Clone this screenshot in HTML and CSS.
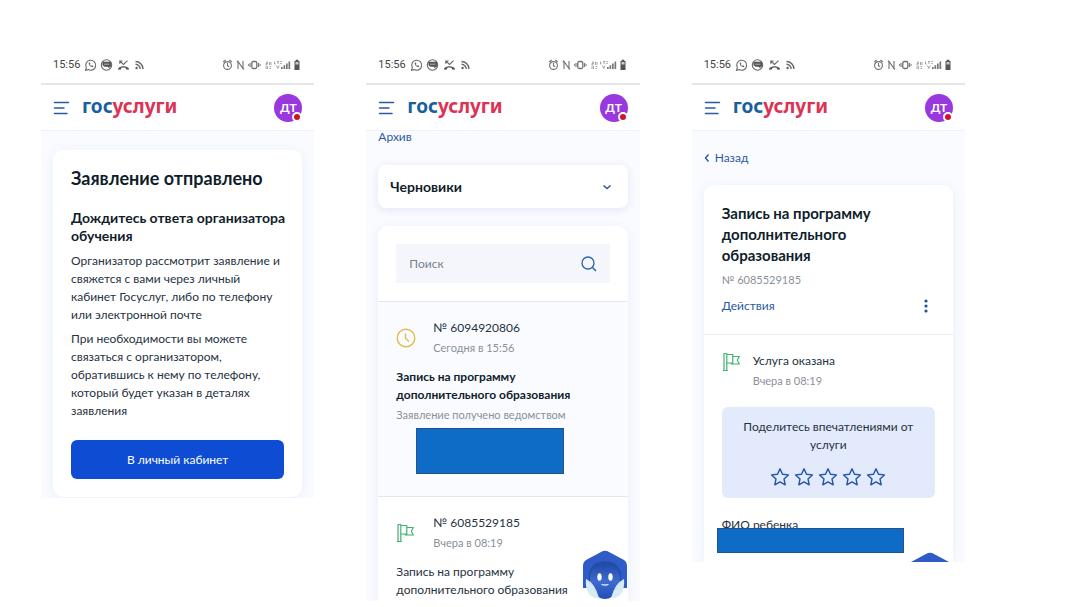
FILE: index.html
```
<!DOCTYPE html>
<html lang="ru">
<head>
    <meta charset="utf-8">
    <meta name="viewport" content="width=device-width, initial-scale=1">
    <title>Госуслуги</title>
    <link rel="stylesheet" href="styles.css">
</head>
<body>
    <!-- shared icons -->
    <svg class="sprite" aria-hidden="true">
        <symbol id="i-left" viewBox="0 0 62 14">
            <g fill="none" stroke="#666" stroke-width="1.1">
                <path d="M1.5 12.3l.8-2.7a5 5 0 1 1 2 2z"/>
                <path d="M4.6 5c.4 2.5 1.8 4 4.1 4.3l.8-1.2-1.6-.8-.7.7c-.7-.4-1-.9-1.3-1.5l.5-.7-.7-1.5z" fill="#666" stroke="none"/>
                <circle cx="22.500" cy="7" r="5.200"/>
                <path d="M18.500 3.800h8.500v5h-1.500v1.700l-2-1.700h-3l-2-1.500z" fill="#555" stroke="none"/>
                <path d="M20 6.200h5.500" stroke="#bbb" stroke-width=".9"/>
                <path d="M36 3.200l3.500 3.300 4-3.800M35.800 5.800v-2.800h2.700"/>
                <path d="M34.200 11.800v-1.600c3-2.600 7.600-2.600 10.600 0v1.600l-2.700-.4-.5-1.700q-2.100-.6-4.200 0l-.5 1.700z" fill="#555" stroke="none"/>
                <path d="M51.500 3.500a7.500 7.500 0 0 1 7.500 7.500M51.500 6.300a4.700 4.700 0 0 1 4.700 4.700" stroke-width="1.400"/>
                <circle cx="52.600" cy="10" r="1.200" fill="#666" stroke="none"/>
            </g>
        </symbol>
        <symbol id="i-right" viewBox="0 0 80 14">
            <g fill="none" stroke="#707070" stroke-width="1.100">
                <circle cx="5.500" cy="7.500" r="3.900"/>
                <path d="M5.500 5v2.700l1.700 1M1.200 4l2.400-2M9.800 4l-2.400-2"/>
                <path d="M16 11v-7.500l5 7v-7.500M14.800 3.500h1.700M20.500 10.700h1.700"/>
                <rect x="29.800" y="3.500" width="5" height="7" rx="1.500" stroke-width="1.300"/>
                <path d="M28 5v4M36.600 5v4M26.500 6.200v1.600M38.200 6.200v1.600"/>
                <path d="M44 4h1.500v1.500h-1.500v1.500h1.500M47.500 4v3M49 4v3M44 8.200v2.800M45.500 8.200v2.800M47.500 8.500h1.700M47.500 10.500h1.700" stroke="#999" stroke-width=".9"/>
                <path d="M52.500 3.500v2.500h1.200M55 3.500h2M56 3.500v2.500M58.200 3.500h1.600M58.200 5.500h1.600M54.500 7.500l1.300 3 1.300-3" stroke="#999" stroke-width=".9"/>
            </g>
            <path d="M59 11v-2h1.700v2zM61.500 11v-3.700h1.700v3.700zM64 11v-5.500h1.700v5.500zM66.500 11v-7.500h1.700v7.500z" fill="#777"/>
            <path d="M72.500 3h1.200v-1.200h2.600v1.200h1.200v9h-5z" fill="#555"/>
            <path d="M73.500 4h3v2.500h-3z" fill="#ccc"/>
        </symbol>
        <symbol id="i-menu" viewBox="0 0 16 14">
            <path d="M1 1.500h14M1 7h9.500M1 12.500h12.500" stroke="#2b5aa0" stroke-width="1.500" stroke-linecap="round"/>
        </symbol>
        <symbol id="i-flag" viewBox="0 0 20 20">
            <path d="M2 1.500h2.800v17h-2.800zM1 18.500h4.800M4.800 2.500h6v8.500h-6M10.800 4.500h6.500l-2 3.700 2 3.800h-8v-1M10.800 4.500v6.500l-1.500 1" fill="none" stroke="#41b26f" stroke-width="1.200" stroke-linejoin="round"/>
        </symbol>
        <symbol id="i-star" viewBox="0 0 20 20">
            <path d="M10 1.800l2.500 5.400 5.900.7-4.400 4 1.200 5.900-5.200-2.900-5.200 2.900 1.200-5.900-4.400-4 5.900-.7z" fill="none" stroke="#2454ab" stroke-width="1.400" stroke-linejoin="round"/>
        </symbol>
        <symbol id="i-bot" viewBox="0 0 46 50">
            <linearGradient id="face" x1="0" y1="0" x2="0" y2="1">
                <stop offset="0" stop-color="#204aa8"/>
                <stop offset=".5" stop-color="#3f6bd0"/>
                <stop offset="1" stop-color="#234eb5"/>
            </linearGradient>
            <path d="M19 2q4-2.500 8 0l15 8q3 2 3 6v22q-5 3-8 5h-29q-5-3-7-5v-22q0-4 3-6z" fill="#2e5bc8"/>
            <path d="M7 24q2-12 16-13 14 1 16 13v22h-32z" fill="#234ca9"/>
            <path d="M0 38h8l8 12h-16zM46 38h-8l-8 12h16z" fill="#fff"/>
            <path d="M8 28q0-13 15-14 15 1 15 14 0 7-4 12-3 9-11 9t-11-9q-4-5-4-12z" fill="url(#face)"/>
            <path d="M4 29q9 4 13 19-6 1-10-4-4-6-3-15zM42 29q-9 4-13 19 6 1 10-4 4-6 3-15z" fill="#d7ebf4"/>
            <path d="M4 29q7 5 13 19-4-11-13-19zM42 29q-7 5-13 19 4-11 13-19z" fill="#a4cbe5"/>
            <ellipse cx="17.500" cy="27" rx="2.200" ry="3.800" fill="#fff"/>
            <ellipse cx="28.500" cy="27" rx="2.200" ry="3.800" fill="#fff"/>
            <path d="M19.500 34.500q3.500 1 7 0" fill="none" stroke="#dfeaff" stroke-width="1.300"/>
        </symbol>
    </svg>

    <main class="board">
        <section class="phone">
            <div class="status">
                <span class="time">15:56</span>
                <svg class="st-left"><use href="#i-left"/></svg>
                <svg class="st-right"><use href="#i-right"/></svg>
            </div>
            <header class="header">
                <button class="menu" aria-label="Меню"><svg><use href="#i-menu"/></svg></button>
                <a class="logo" href="#">гос<span>услуги</span></a>
                <button class="avatar">ДТ<i class="dot"></i></button>
            </header>
            <div class="content sent">
                <article class="card">
                    <h1>Заявление отправлено</h1>
                    <h2>Дождитесь ответа организатора обучения</h2>
                    <p>Организатор рассмотрит заявление и свяжется с вами через личный кабинет Госуслуг, либо по телефону или электронной почте</p>
                    <p>При необходимости вы можете связаться с организатором, обратившись к нему по телефону, который будет указан в деталях заявления</p>
                    <button class="primary">В личный кабинет</button>
                </article>
            </div>
        </section>

        <section class="phone">
            <div class="status">
                <span class="time">15:56</span>
                <svg class="st-left"><use href="#i-left"/></svg>
                <svg class="st-right"><use href="#i-right"/></svg>
            </div>
            <header class="header">
                <button class="menu" aria-label="Меню"><svg><use href="#i-menu"/></svg></button>
                <a class="logo" href="#">гос<span>услуги</span></a>
                <button class="avatar">ДТ<i class="dot"></i></button>
            </header>
            <div class="content list">
                <a class="archive" href="#">Архив</a>
                <button class="drafts">Черновики
                    <svg viewBox="0 0 10 10"><path d="M1.500 3.500l3.500 3 3.500-3" fill="none" stroke="#2b5aa0" stroke-width="1.600"/></svg>
                </button>
                <div class="card orders">
                    <label class="search">
                        <input type="text" placeholder="Поиск" aria-label="Поиск">
                        <svg viewBox="0 0 16 16"><circle cx="7" cy="7" r="6" fill="none" stroke="#2b64aa" stroke-width="1.300"/><path d="M11.500 11.500l3.500 3.500" stroke="#2b64aa" stroke-width="1.500"/></svg>
                    </label>
                    <article class="order unread">
                        <div class="order-head">
                            <svg viewBox="0 0 20 20"><g fill="none" stroke="#e3bb4a" stroke-width="1.400"><circle cx="10" cy="10" r="8.800"/><path d="M9.500 5.500v4.700l3.500 3.300"/></g></svg>
                            <div>
                                <div class="num">№ 6094920806</div>
                                <div class="date">Сегодня в 15:56</div>
                            </div>
                        </div>
                        <h3>Запись на программу дополнительного образования</h3>
                        <div class="state">Заявление получено ведомством</div>
                        <div class="redacted"></div>
                    </article>
                    <article class="order">
                        <div class="order-head">
                            <svg><use href="#i-flag"/></svg>
                            <div>
                                <div class="num">№ 6085529185</div>
                                <div class="date">Вчера в 08:19</div>
                            </div>
                        </div>
                        <h3>Запись на программу дополнительного образования</h3>
                    </article>
                </div>
            </div>
            <button class="bot" aria-label="Помощник"><svg><use href="#i-bot"/></svg></button>
        </section>

        <section class="phone">
            <div class="status">
                <span class="time">15:56</span>
                <svg class="st-left"><use href="#i-left"/></svg>
                <svg class="st-right"><use href="#i-right"/></svg>
            </div>
            <header class="header">
                <button class="menu" aria-label="Меню"><svg><use href="#i-menu"/></svg></button>
                <a class="logo" href="#">гос<span>услуги</span></a>
                <button class="avatar">ДТ<i class="dot"></i></button>
            </header>
            <div class="content details">
                <a class="back" href="#">
                    <svg viewBox="0 0 6 10"><path d="M4.500 1.500l-3 3.500 3 3.500" fill="none" stroke="#2b5aa0" stroke-width="1.400"/></svg>Назад
                </a>
                <article class="card">
                    <div class="summary">
                        <h2>Запись на программу дополнительного образования</h2>
                        <div class="date">№ 6085529185</div>
                        <div class="actions">
                            <a href="#">Действия</a>
                            <button class="more" aria-label="Ещё"><svg viewBox="0 0 4 14"><g fill="#1f4fa3"><circle cx="2" cy="2" r="1.600"/><circle cx="2" cy="7" r="1.600"/><circle cx="2" cy="12" r="1.600"/></g></svg></button>
                        </div>
                    </div>
                    <div class="result">
                        <div class="order-head">
                            <svg><use href="#i-flag"/></svg>
                            <div>
                                <div class="num">Услуга оказана</div>
                                <div class="date">Вчера в 08:19</div>
                            </div>
                        </div>
                        <div class="rating">
                            Поделитесь впечатлениями от услуги
                            <div class="stars">
                                <button aria-label="1"><svg><use href="#i-star"/></svg></button>
                                <button aria-label="2"><svg><use href="#i-star"/></svg></button>
                                <button aria-label="3"><svg><use href="#i-star"/></svg></button>
                                <button aria-label="4"><svg><use href="#i-star"/></svg></button>
                                <button aria-label="5"><svg><use href="#i-star"/></svg></button>
                            </div>
                        </div>
                        <div class="child">ФИО ребенка</div>
                        <div class="redacted"></div>
                    </div>
                </article>
            </div>
            <button class="bot" aria-label="Помощник"><svg><use href="#i-bot"/></svg></button>
        </section>
    </main>
</body>
</html>
```
FILE: styles.css
```
* {
    box-sizing: border-box;
}
body {
    margin: 0;
    background: #fff;
    color: #26323f;
    font: 12px/18px Lato, "Open Sans", sans-serif;
}
h1, h2, h3, p {
    margin: 0;
}
a {
    color: #2b5aa0;
    text-decoration: none;
}
button {
    padding: 0;
    border: 0;
    background: none;
    font: inherit;
    color: inherit;
    cursor: pointer;
}
svg {
    display: block;
    flex: none;
}
.sprite {
    position: absolute;
    width: 0;
    height: 0;
}

.board {
    display: grid;
    grid-template-columns: repeat(3, 1fr);
    align-items: start;
    gap: 52px;
    padding: 46px 115px 0 41px;
}
.phone {
    position: relative;
    overflow: hidden;
}

/* status bar */
.status {
    display: flex;
    align-items: center;
    height: 37px;
    padding: 0 12px;
}
.time {
    margin-right: 4px;
    font: 11px/18px Roboto, sans-serif;
    color: #444;
}
.st-left {
    width: 62px;
    height: 14px;
}
.st-right {
    width: 80px;
    height: 14px;
    margin-left: auto;
}

/* header */
.header {
    display: flex;
    align-items: center;
    height: 48px;
    padding: 0 12px;
    border-top: 2px solid #e6e6e8;
    border-bottom: 1px solid #f1f2f8;
}
.menu svg {
    width: 17px;
    height: 14px;
}
.logo {
    margin-left: 12px;
    padding-bottom: 3px;
    font: bold 19px/24px "Noto Sans", sans-serif;
    color: #17609c;
}
.logo span {
    color: #dc3354;
}
.avatar {
    position: relative;
    width: 28px;
    height: 28px;
    margin-left: auto;
    border-radius: 50%;
    background: #9a38e0;
    color: #fff;
    font-weight: bold;
}
.dot {
    position: absolute;
    right: 0;
    bottom: 0;
    width: 10px;
    height: 10px;
    border: 2px solid #fff;
    border-radius: 50%;
    background: #d0142c;
}

.content {
    padding: 0 12px;
    background: #fafbff;
}
.card {
    border-radius: 10px;
    background: #fff;
    box-shadow: 0 2px 12px #e9eefb;
}

/* application sent */
.sent {
    padding-top: 19px;
    padding-bottom: 1px;
}
.sent .card {
    padding: 16px 18px 18px;
}
h1 {
    margin-bottom: 19px;
    font-size: 18px;
    line-height: 24px;
    color: #101d2b;
}
.sent h2 {
    margin: 0 -6px 7px 0;
    font-size: 14px;
    line-height: 18px;
    color: #101d2b;
}
.sent p {
    margin-bottom: 6px;
}
.primary {
    width: 100%;
    height: 39px;
    margin-top: 14px;
    border-radius: 6px;
    background: #0d4cd3;
    color: #fff;
}

/* orders list */
.archive {
    display: block;
    line-height: 12px;
}
.drafts {
    display: flex;
    align-items: center;
    justify-content: space-between;
    width: 100%;
    height: 43px;
    margin: 22px 0 18px;
    padding: 0 16px 0 12px;
    border-radius: 8px;
    background: #fff;
    box-shadow: 0 2px 8px #dfe5f6;
    font-size: 14px;
    font-weight: bold;
    color: #101d2b;
}
.drafts svg {
    width: 10px;
    height: 10px;
}
.search {
    display: flex;
    align-items: center;
    height: 39px;
    margin: 0 18px;
    padding: 0 13px;
    background: #f5f6fb;
}
.orders {
    padding-top: 18px;
    border-radius: 10px 10px 0 0;
}
.search input {
    flex: 1;
    min-width: 0;
    padding: 0;
    border: 0;
    background: none;
    font: inherit;
}
.search input::placeholder {
    color: #7b828c;
}
.search svg {
    width: 16px;
    height: 16px;
}
.order {
    padding: 17px 18px 2px;
    border-top: 1px solid #e5e7ee;
}
.unread {
    margin-top: 18px;
    padding-bottom: 22px;
    background: #fafbff;
}
.order-head {
    display: flex;
    align-items: center;
    gap: 17px;
    margin-bottom: 12px;
}
.order-head svg {
    width: 20px;
    height: 20px;
}
.num {
    margin-bottom: 3px;
}
.date, .state {
    font-size: 11px;
    line-height: 16px;
    color: #8a9099;
}
.order h3 {
    font-size: 12px;
    line-height: 18px;
    font-weight: normal;
}
.unread h3 {
    margin-bottom: 3px;
    font-weight: bold;
    color: #101d2b;
}
.redacted {
    height: 46px;
    margin: 5px 46px 0 20px;
    border: 1px solid #21548c;
    background: #0f6cc6;
}

/* order details */
.back {
    display: flex;
    align-items: center;
    gap: 5px;
    padding: 18px 0;
}
.back svg {
    width: 6px;
    height: 10px;
}
.details .card {
    border-radius: 10px 10px 0 0;
}
.summary {
    padding: 18px 18px 19px;
    border-bottom: 1px solid #e9ebf2;
}
.summary h2 {
    margin-bottom: 6px;
    font-size: 15px;
    line-height: 21px;
    color: #101d2b;
}
.actions {
    display: flex;
    justify-content: space-between;
    margin-top: 9px;
}
.more {
    padding: 0 7px;
}
.more svg {
    width: 4px;
    height: 14px;
}
.result {
    padding: 17px 18px 9px;
}
.result .order-head {
    align-items: flex-start;
    gap: 11px;
    margin-bottom: 18px;
}
.rating {
    padding: 11px 18px;
    border-radius: 6px;
    background: #e3eafb;
    text-align: center;
}
.stars {
    display: flex;
    justify-content: center;
    gap: 4px;
    margin-top: 13px;
}
.stars svg {
    width: 20px;
    height: 20px;
}
.child {
    height: 12px;
    margin-top: 18px;
}
.result .redacted {
    position: relative;
    height: 25px;
    margin: 0 31px 0 -5px;
}

/* assistant */
.bot {
    position: absolute;
    right: 12px;
    bottom: 1px;
}
.bot svg {
    width: 46px;
    height: 50px;
}
.details + .bot {
    bottom: -40px;
}
```
